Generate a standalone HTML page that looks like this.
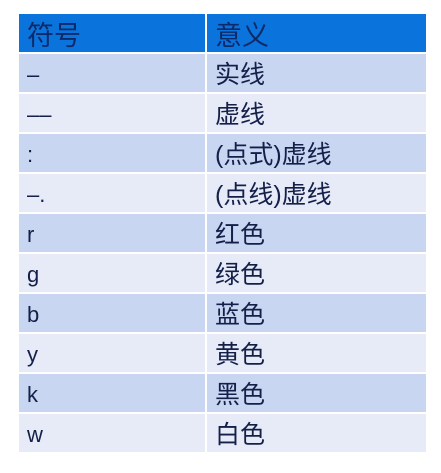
<!DOCTYPE html>
<html><head><meta charset="utf-8"><style>
body{margin:0;background:#fff;width:441px;height:473px;overflow:hidden;font-family:"Liberation Sans","Noto Sans CJK SC",sans-serif;}
.t{position:absolute;left:19px;top:14px;width:407px;}
.row{display:flex;height:38px;margin-bottom:2px;}
.row div{height:38px;display:flex;align-items:center;color:#14204a;}
.l{width:186px;margin-right:2px;padding-left:8px;box-sizing:border-box;font-size:22px;padding-top:4px;}
.r{flex:1;padding-left:8px;font-size:25px;}
.h div{background:#0a74dc;color:#0c2a6a;font-size:27px;}
.h .l{font-size:27px;padding-top:0;}
.a div{background:#c9d6f1;}
.b div{background:#e6ebf7;}
</style></head><body>
<div class="t">
<div class="row h"><div class="l">符号</div><div class="r">意义</div></div>
<div class="row a"><div class="l">–</div><div class="r">实线</div></div>
<div class="row b"><div class="l">––</div><div class="r">虚线</div></div>
<div class="row a"><div class="l">:</div><div class="r">(点式)虚线</div></div>
<div class="row b"><div class="l">–.</div><div class="r">(点线)虚线</div></div>
<div class="row a"><div class="l">r</div><div class="r">红色</div></div>
<div class="row b"><div class="l">g</div><div class="r">绿色</div></div>
<div class="row a"><div class="l">b</div><div class="r">蓝色</div></div>
<div class="row b"><div class="l">y</div><div class="r">黄色</div></div>
<div class="row a"><div class="l">k</div><div class="r">黑色</div></div>
<div class="row b"><div class="l">w</div><div class="r">白色</div></div>
</div>
</body></html>
